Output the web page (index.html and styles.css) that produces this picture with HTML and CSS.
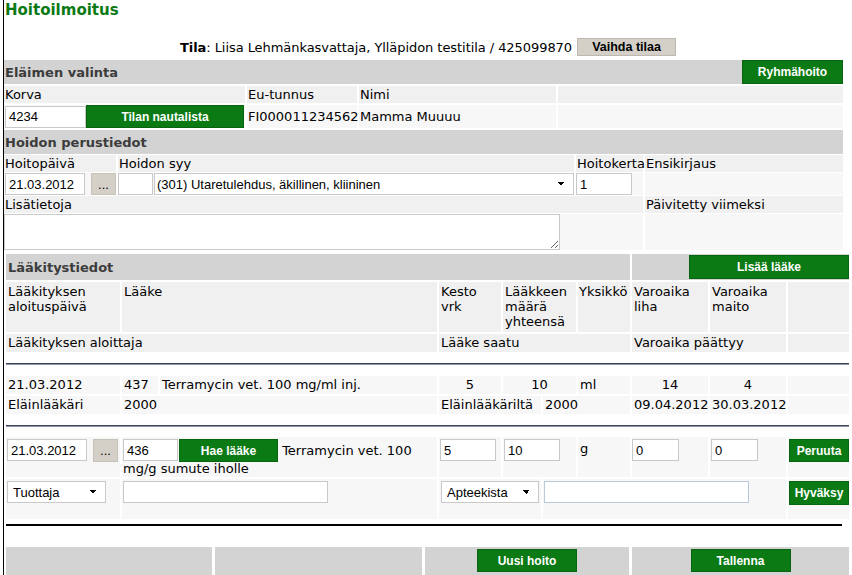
FILE: index.html
```html
<!DOCTYPE html>
<html lang="fi">
<head>
<meta charset="utf-8">
<title>Hoitoilmoitus</title>
<link rel="stylesheet" href="styles.css">
</head>
<body>
<div class="page">
  <h1 class="title">Hoitoilmoitus</h1>

  <div class="farm">
    <span class="farm-text"><b>Tila</b>: Liisa Lehmänkasvattaja, Ylläpidon testitila / 425099870</span>
    <button type="button" class="btn-grey">Vaihda tilaa</button>
  </div>

  <div class="sec animal">
    <div class="sec-head"><span>Eläimen valinta</span><button type="button" class="btn-green btn-ryhma">Ryhmähoito</button></div>
    <div class="lbl">Korva</div>
    <div class="lbl">Eu-tunnus</div>
    <div class="lbl">Nimi</div>
    <div class="lbl"></div>
    <div class="val"><input class="inp inp-korva" type="text" value="4234"><button type="button" class="btn-green btn-tila">Tilan nautalista</button></div>
    <div class="val">FI000011234562</div>
    <div class="val">Mamma Muuuu</div>
    <div class="val"></div>
  </div>

  <div class="sec basic">
    <div class="sec-head"><span>Hoidon perustiedot</span></div>
    <div class="lbl">Hoitopäivä</div>
    <div class="lbl">Hoidon syy</div>
    <div class="lbl">Hoitokerta</div>
    <div class="lbl">Ensikirjaus</div>
    <div class="val val-top"><input class="inp inp-date" type="text" value="21.03.2012"><button type="button" class="btn-dots">...</button></div>
    <div class="val val-top val-flush"><input class="inp inp-code" type="text" value=""><select class="sel sel-syy"><option>(301) Utaretulehdus, äkillinen, kliininen</option></select></div>
    <div class="val val-top val-flush"><input class="inp inp-kerta" type="text" value="1"></div>
    <div class="val"></div>
    <div class="lbl span-abc">Lisätietoja</div>
    <div class="lbl">Päivitetty viimeksi</div>
    <div class="val val-top val-flush span-abc"><textarea class="notes"></textarea></div>
    <div class="val"></div>
  </div>

  <div class="med med-top">
    <div class="med-head span-1-6">Lääkitystiedot</div>
    <div class="med-head med-head-btn span-6-9"><button type="button" class="btn-green btn-lisaa">Lisää lääke</button></div>
    <div class="mh">Lääkityksen aloituspäivä</div>
    <div class="mh">Lääke</div>
    <div class="mh">Kesto vrk</div>
    <div class="mh">Lääkkeen määrä yhteensä</div>
    <div class="mh mh-tight">Yksikkö</div>
    <div class="mh">Varoaika liha</div>
    <div class="mh">Varoaika maito</div>
    <div class="mh"></div>
    <div class="mh2 span-1-3">Lääkityksen aloittaja</div>
    <div class="mh2 span-3-6">Lääke saatu</div>
    <div class="mh2 span-6-8">Varoaika päättyy</div>
    <div class="mh2"></div>
  </div>

  <div class="rule"></div>

  <div class="med med-data">
    <div class="dc">21.03.2012</div>
    <div class="split split-code"><div class="dc">437</div><div class="dc">Terramycin vet. 100 mg/ml inj.</div></div>
    <div class="dc center">5</div>
    <div class="dc center">10</div>
    <div class="dc">ml</div>
    <div class="dc center">14</div>
    <div class="dc center">4</div>
    <div class="dc"></div>
    <div class="dc">Eläinlääkäri</div>
    <div class="dc">2000</div>
    <div class="split split-saatu"><div class="dc">Eläinlääkäriltä</div><div class="dc">2000</div></div>
    <div class="dc">09.04.2012</div>
    <div class="dc">30.03.2012</div>
    <div class="dc"></div>
  </div>

  <div class="rule rule-last"></div>

  <div class="med med-edit">
    <div class="ec ec-flex"><input class="inp inp-date" type="text" value="21.03.2012"><button type="button" class="btn-dots btn-dots-tall">...</button></div>
    <div class="ec ec-drug"><input class="inp inp-drug" type="text" value="436"><button type="button" class="btn-green btn-hae">Hae lääke</button> <span class="drug-name">Terramycin vet. 100</span><br><span class="drug-name">mg/g sumute iholle</span></div>
    <div class="ec"><input class="inp inp-num" type="text" value="5"></div>
    <div class="ec"><input class="inp inp-num" type="text" value="10"></div>
    <div class="ec ec-unit">g</div>
    <div class="ec ec-nopad"><input class="inp inp-wait" type="text" value="0"></div>
    <div class="ec"><input class="inp inp-wait" type="text" value="0"></div>
    <div class="ec"><button type="button" class="btn-green btn-side">Peruuta</button></div>

    <div class="ec"><select class="sel sel-small sel-tuottaja"><option>Tuottaja</option></select></div>
    <div class="ec ec-wide"><input class="inp inp-long" type="text" value=""></div>
    <div class="split split-source">
      <div class="ec ec-sel"><select class="sel sel-small sel-apteekki"><option>Apteekista</option></select></div>
      <div class="ec"><input class="inp inp-long inp-blue" type="text" value=""></div>
    </div>
    <div class="ec"><button type="button" class="btn-green btn-side btn-ok">Hyväksy</button></div>
  </div>

  <div class="hr-black"></div>

  <div class="foot">
    <div class="foot-cell"></div>
    <div class="foot-cell"></div>
    <div class="foot-cell"><button type="button" class="btn-green btn-foot">Uusi hoito</button></div>
    <div class="foot-cell"><button type="button" class="btn-green btn-foot">Tallenna</button></div>
  </div>
</div>
</body>
</html>
```

FILE: styles.css
```css
* { box-sizing: border-box; }
html, body { margin: 0; padding: 0; }
body {
  font-family: "DejaVu Sans", Verdana, sans-serif;
  font-size: 13px;
  color: #000;
  background: #fff;
  overflow: hidden;
}
.page {
  margin-left: 3px;
  border-left: 1px solid #000;
  min-height: 100vh;
}

/* title + farm line */
.title {
  margin: 0;
  height: 38px;
  padding: 1px 0 0 1px;
  font-size: 15px;
  line-height: 18px;
  font-weight: bold;
  color: #0b7a14;
}
.farm {
  display: flex;
  justify-content: center;
  align-items: center;
  height: 18px;
  margin-bottom: 4px;
}
.farm-text { margin-right: 5px; letter-spacing: -0.06px; }

/* controls */
.btn-grey {
  width: 99px;
  height: 18px;
  padding: 0;
  font: bold 12.5px "Liberation Sans", Arial, sans-serif;
  color: #000;
  background: #d4d0c8;
  border: 1px solid #bdb9b1;
  border-radius: 0;
}
.btn-green {
  height: 23px;
  padding: 0;
  margin: 0;
  font: bold 12px "Liberation Sans", Arial, sans-serif;
  color: #fff;
  background: #0b7a14;
  border: 1px solid #08650f;
  border-radius: 0;
}
.btn-dots {
  width: 25px;
  height: 22px;
  padding: 0;
  margin: 0 0 0 6px;
  font: 13px "Liberation Sans", Arial, sans-serif;
  color: #000;
  background: #d4d0c8;
  border: 1px solid #c6c2ba;
  border-radius: 0;
}
.btn-dots-tall { height: 23px; }
.inp {
  height: 22px;
  margin: 0;
  padding: 0 3px;
  font: 13px "Liberation Sans", Arial, sans-serif;
  color: #000;
  background: #fff;
  border: 1px solid #c9c9c9;
  border-radius: 0;
}
.sel {
  -webkit-appearance: none;
  appearance: none;
  height: 22px;
  margin: 0;
  padding: 0 14px 0 5px;
  font: 13px "Liberation Sans", Arial, sans-serif;
  color: #000;
  border: 1px solid #c9c9c9;
  border-radius: 0;
  background-color: #fff;
  background-image: linear-gradient(45deg, transparent 50%, #000 50%), linear-gradient(135deg, #000 50%, transparent 50%);
  background-size: 4px 4px, 4px 4px;
  background-repeat: no-repeat;
  background-position: calc(100% - 12px) 8px, calc(100% - 8px) 8px;
}
.notes {
  display: block;
  width: 556px;
  height: 36px;
  margin: 0;
  padding: 2px;
  font: 13px "Liberation Sans", Arial, sans-serif;
  border: 1px solid #c9c9c9;
  border-radius: 0;
}

/* sections 1 & 2 */
.sec {
  display: grid;
  gap: 2px;
  width: 839px;
}
.sec-head {
  grid-column: 1 / -1;
  display: flex;
  align-items: center;
  justify-content: space-between;
  background: #d3d3d3;
  color: #3c3c3c;
  font-weight: bold;
  padding-left: 1px;
}
.lbl {
  background: #f0f0f0;
  padding-left: 1px;
  line-height: 17px;
  white-space: nowrap;
}
.val {
  background: #f7f7f7;
  display: flex;
  align-items: center;
  padding-left: 1px;
  white-space: nowrap;
}
.val-top { align-items: flex-start; }
.val-flush { padding-left: 0; }

.animal {
  grid-template-columns: 241px 110px 197px 1fr;
  grid-template-rows: 24px 17px 23px;
}
.btn-ryhma { width: 101px; height: 24px; }
.btn-tila { width: 158px; }
.inp-korva { width: 81px; }

.basic {
  margin-top: 2px;
  row-gap: 1px;
  grid-template-columns: 112px 456px 67px 198px;
  grid-template-rows: 24px 17px 22px 17px 36px;
}
.span-abc { grid-column: 1 / 4; }
.inp-date { width: 80px; }
.inp-code { width: 35px; }
.sel-syy { width: 420px; margin-left: 1px; padding-left: 2px; }
.inp-kerta { width: 56px; }

/* medication */
.med {
  display: grid;
  column-gap: 2px;
  row-gap: 2px;
  width: 843px;
  margin-left: 2px;
  grid-template-columns: 114px 315px 62px 73px 52px 76px 76px 61px;
}
.med-top {
  margin-top: 4px;
  grid-template-rows: 26px 50px 18px;
}
.span-1-6 { grid-column: 1 / 6; }
.span-6-9 { grid-column: 6 / 9; }
.span-1-3 { grid-column: 1 / 3; }
.span-3-6 { grid-column: 3 / 6; }
.span-6-8 { grid-column: 6 / 8; }
.med-head {
  display: flex;
  align-items: center;
  background: #d3d3d3;
  color: #3c3c3c;
  font-weight: bold;
  padding-left: 2px;
}
.med-head-btn { justify-content: flex-end; padding-left: 0; }
.btn-lisaa { width: 160px; height: 24px; }
.mh {
  background: #f0f0f0;
  padding: 2px 0 0 2px;
  line-height: 15px;
}
.mh-tight { padding-left: 1px; }
.mh2 {
  background: #f0f0f0;
  padding-left: 2px;
  line-height: 18px;
  white-space: nowrap;
}

.rule {
  width: 843px;
  height: 2px;
  margin: 11px 0 11px 2px;
  border-top: 1px solid #3e4659;
  border-bottom: 1px solid #8e94a4;
}
.rule-last { margin-bottom: 10px; }

.med-data { grid-template-rows: 18px 18px; }
.dc {
  background: #f7f7f7;
  padding-left: 2px;
  line-height: 18px;
  white-space: nowrap;
}
.dc.center { text-align: center; padding-left: 0; }
.split { display: grid; column-gap: 2px; }
.split-code { grid-template-columns: 36px 1fr; }
.split-saatu { grid-column: 3 / 6; grid-template-columns: 102px 1fr; }
.split-source { grid-column: 3 / 8; grid-template-columns: 102px 1fr; }

.med-edit { grid-template-rows: 40px 40px; }
.ec {
  background: #f7f7f7;
  padding: 2px 0 0 1px;
}
.ec-flex { display: flex; align-items: flex-start; }
.ec-drug { line-height: 14px; }
.drug-name { white-space: nowrap; }
.ec-unit { padding: 3px 0 0 2px; line-height: 18px; }
.ec-nopad { padding-left: 0; }
.ec-sel { padding-left: 2px; }
.inp-drug { width: 55px; }
.btn-hae { width: 99px; margin-left: 1px; }
.inp-num { width: 56px; }
.inp-wait { width: 47px; }
.btn-side { width: 60px; }
.btn-ok { height: 24px; }
.sel-tuottaja { width: 99px; }
.sel-apteekki { width: 98px; }
.inp-long { width: 205px; }
.inp-blue { border-color: #b9c9d9; }

.hr-black {
  width: 836px;
  height: 2px;
  margin: 5px 0 0 2px;
  background: #000;
}
.foot {
  display: grid;
  grid-template-columns: 206px 207px 204px 217px;
  column-gap: 3px;
  width: 843px;
  height: 28px;
  margin: 21px 0 0 2px;
}
.foot-cell {
  display: flex;
  justify-content: center;
  align-items: flex-start;
  padding-top: 2px;
  background: #d3d3d3;
}
.btn-foot { width: 100px; height: 23px; }
```
